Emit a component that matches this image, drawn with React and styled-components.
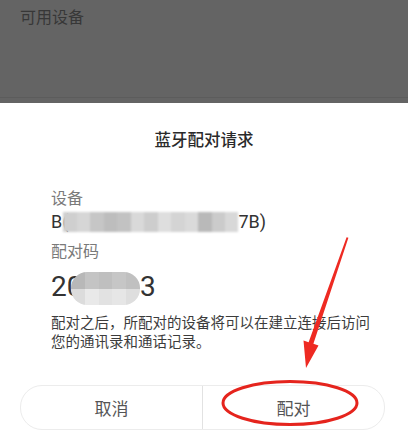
import React from "react";
import styled, { createGlobalStyle } from "styled-components";

const Global = createGlobalStyle`
  html, body { margin: 0; padding: 0; background: #ffffff; }
  body { width: 408px; height: 434px; overflow: hidden; font-family: Roboto, "Noto Sans CJK SC", sans-serif; }
  #root { width: 408px; height: 434px; }
`;

const Page = styled.div`
  position: relative;
  width: 408px;
  height: 434px;
  display: flex;
  flex-direction: column;
`;

const Dim = styled.div`
  height: 103px;
  background: #646464;
  box-sizing: border-box;
  padding: 7px 0 0 20px;
  display: flex;
  flex-direction: column;
  justify-content: space-between;
`;

const DimText = styled.div`
  font-size: 16px;
  line-height: 22px;
  color: #373737;
`;

const DimLine = styled.div`
  height: 1px;
  margin: 0 0 5px -20px;
  background: #5c5c5c;
`;

const Sheet = styled.div`
  flex: 1;
  background: #ffffff;
  display: flex;
  flex-direction: column;
  padding: 27px 0 0 0;
`;

const Title = styled.div`
  text-align: center;
  font-size: 16.5px;
  line-height: 22px;
  color: #2a2a2a;
  font-weight: 500;
  margin-bottom: 36px;
`;

const Body = styled.div`
  padding: 0 30px 0 51px;
  display: flex;
  flex-direction: column;
`;

const Label = styled.div`
  font-size: 16px;
  line-height: 22px;
  color: #7a7a7a;
  margin-top: ${(p) => p.$gap || 0}px;
`;

const Value = styled.div`
  display: flex;
  align-items: center;
  font-size: ${(p) => p.$size}px;
  line-height: ${(p) => p.$lh}px;
  margin-top: ${(p) => p.$gap || 0}px;
  color: #333333;
`;

const Mosaic = styled.div`
  display: flex;
  height: 20px;
  width: 175px;
  margin: 0 0 0 -5px;
  overflow: hidden;
  filter: blur(0.8px);
`;

const Tile = styled.div`
  flex: 1;
  background: ${(p) => p.$c};
`;

const CodeMosaic = styled.div`
  width: 69px;
  height: 33px;
  margin: 3px 0 0 -11.5px;
  border-radius: 16px;
  overflow: hidden;
  display: grid;
  grid-template-columns: repeat(5, 1fr);
  grid-template-rows: 1fr 1fr;
  filter: blur(0.7px);
`;

const Desc = styled.div`
  margin-top: 9px;
  font-size: 14.5px;
  line-height: 19px;
  color: #3c3c3c;
`;

const Buttons = styled.div`
  margin: 33px 23px 0 20px;
  height: 43px;
  border: 1px solid #ececec;
  border-radius: 22px;
  display: flex;
  align-items: stretch;
`;

const Btn = styled.div`
  flex: 1;
  display: flex;
  align-items: center;
  justify-content: center;
  font-size: 17px;
  color: #555555;
  border-left: ${(p) => (p.$divider ? "1px solid #e2e2e2" : "none")};
`;

const Annot = styled.svg`
  position: absolute;
  left: 0;
  top: 0;
  width: 408px;
  height: 434px;
  pointer-events: none;
`;

const nameTiles = ["#cfcfcf", "#d6d6d6", "#c6c6c6", "#bdbdbd", "#c2c2c2", "#d9d9d9", "#cdcdcd", "#dedede", "#d4d4d4", "#dadada", "#b9b9b9", "#cbcbcb", "#d8d8d8"];
const codeTiles = ["#b8b8b8", "#c4c4c4", "#bfbfbf", "#c6c6c6", "#c0c0c0", "#dcdcdc", "#e9e9e9", "#e2e2e2", "#e6e6e6", "#dedede"];

export default function App() {
  return (
    <>
      <Global />
      <Page>
        <Dim>
          <DimText>可用设备</DimText>
          <DimLine />
        </Dim>
        <Sheet>
          <Title>蓝牙配对请求</Title>
          <Body>
            <Label>设备</Label>
            <Value $size={18} $lh={24}>
              B(
              <Mosaic>
                {nameTiles.map((c, i) => (
                  <Tile key={i} $c={c} />
                ))}
              </Mosaic>
              7B)
            </Value>
            <Label $gap={7}>配对码</Label>
            <Value $size={28} $lh={36} $gap={6}>
              20
              <CodeMosaic>
                {codeTiles.map((c, i) => (
                  <Tile key={i} $c={c} />
                ))}
              </CodeMosaic>
              3
            </Value>
            <Desc>
              配对之后，所配对的设备将可以在建立连接后访问
              <br />
              您的通讯录和通话记录。
            </Desc>
          </Body>
          <Buttons>
            <Btn>取消</Btn>
            <Btn $divider>配对</Btn>
          </Buttons>
        </Sheet>
        <Annot viewBox="0 0 408 434">
          <ellipse cx="290" cy="403" rx="67" ry="21.5" fill="none" stroke="#e5241d" strokeWidth="3" />
          <polygon points="346.6,237.2 348.4,237.8 313.4,343.8 318.5,345.5 306,368 303.5,340.5 308.6,342.2" fill="#ee2a22" />
        </Annot>
      </Page>
    </>
  );
}
